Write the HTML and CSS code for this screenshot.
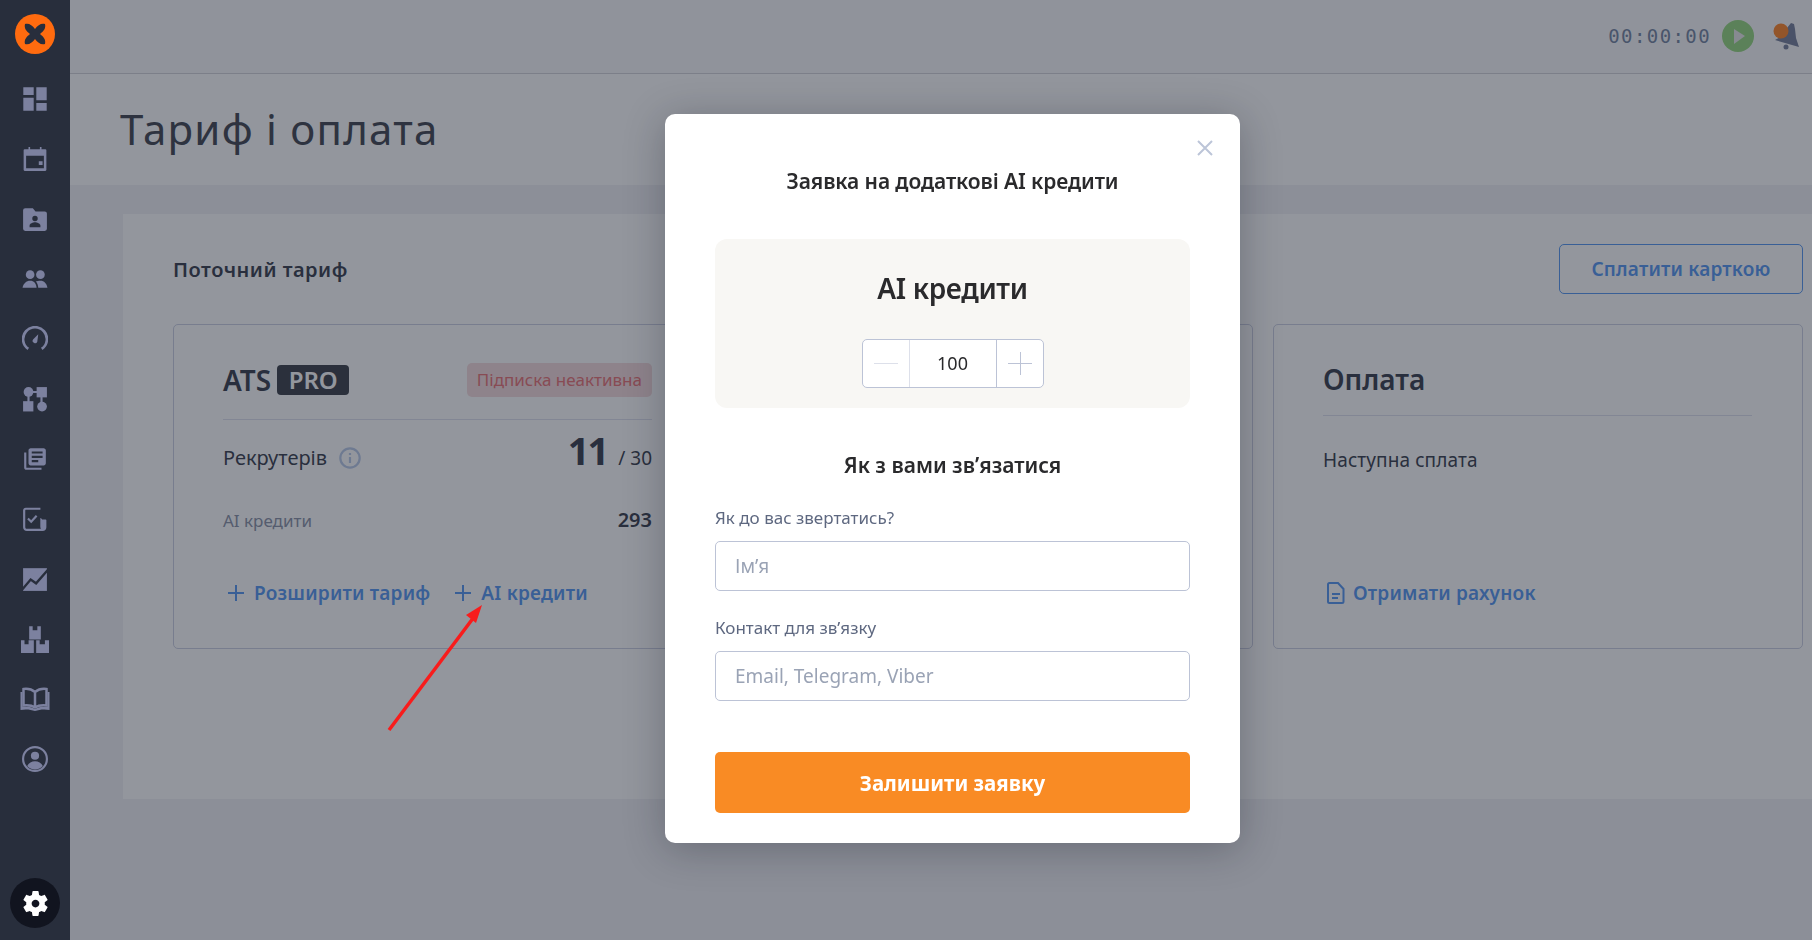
FILE: index.html
```html
<!DOCTYPE html>
<html lang="uk">
<head>
  <meta charset="UTF-8">
  <title>Тариф і оплата</title>
  <link rel="stylesheet" href="styles.css">
</head>
<body>

  <aside class="sidebar">
    <svg class="logo" viewBox="0 0 40 40">
      <circle cx="20" cy="20" r="20" fill="#ff6b0f"/>
      <path d="M10 10C14 9 17 11 20 15 23 11 26 9 30 10 31 14 29 17 25 20 29 23 31 26 30 30 26 31 23 29 20 25 17 29 14 31 10 30 9 26 11 23 15 20 11 17 9 14 10 10z" fill="#282e3c"/>
    </svg>
    <nav class="nav">
      <svg viewBox="2 2 20 20"><path d="M3 9h8V3H3zm0 12h8V11H3zm10 0h8v-6h-8zm0-8h8V3h-8z"/></svg>
      <svg viewBox="0 0 24 24"><path fill-rule="evenodd" d="M6 1h1.500v2h9V1H18v2h3.500a1 1 0 0 1 1 1v18a1 1 0 0 1-1 1h-19a1 1 0 0 1-1-1V4a1 1 0 0 1 1-1H6zM3.800 9v11.500h16.400V9zM15.500 14h3.500v3.500h-3.500z"/></svg>
      <svg viewBox="0 0 24 24"><path fill-rule="evenodd" d="M3 2h7l2.500 3H21a2 2 0 0 1 2 2v14a2 2 0 0 1-2 2H3a2 2 0 0 1-2-2V4a2 2 0 0 1 2-2zm9 7a2.500 2.500 0 1 0 0 5 2.500 2.500 0 0 0 0-5zm-5 10.500h10V18c0-1.800-3.300-3-5-3s-5 1.200-5 3z"/></svg>
      <svg viewBox="0 0 24 24"><circle cx="7.500" cy="8" r="4"/><circle cx="17" cy="8" r="4"/><path d="M.5 20c.8-4 3.500-6.500 7-6.500s5.500 2 6 6.500zM15 20c-.2-2.500-1-4.600-2.300-5.700 1-.5 2.800-.8 4.300-.8 3.500 0 5.800 2.500 6.500 6.500z"/></svg>
      <svg viewBox="0 0 24 24"><path class="line thick" d="M5.800 21.200A11 11 0 1 1 18.200 21.200"/><path d="M15 7.500l-.9 7a2.200 2.200 0 1 1-3.700-2.300z"/></svg>
      <svg viewBox="0 0 24 24"><circle cx="6" cy="5.500" r="4.500"/><rect x="13.500" y="1" width="9.500" height="9.500"/><rect x="1" y="14" width="9.500" height="9.500"/><circle cx="18.500" cy="19" r="4.500"/><path class="line" d="M6 8v7M9 5.500h6M18 9v7"/></svg>
      <svg viewBox="0 0 24 24"><path d="M4 6H2v14c0 1.100.9 2 2 2h14v-2H4V6zm16-4H8c-1.100 0-2 .9-2 2v12c0 1.100.9 2 2 2h12c1.100 0 2-.9 2-2V4c0-1.100-.9-2-2-2zm-1 9H9V9h10v2zm-4 4H9v-2h6v2zm4-8H9V5h10v2z"/></svg>
      <svg viewBox="0 0 24 24"><path d="M3.500 1.500h13.500v2H3.500a.8.800 0 0 0-.5.500v15.500c0 .8.700 1.500 1.500 1.500h13c-.4-.5-.6-1-.6-1.800V11.500c0-.5.4-.6.700-.3.300.3.600.8 1 1.300h3.300c.3 0 .6.300.6.700v6.300c0 1.800-1.400 3.500-3.400 3.500H4.500C2.500 23 1 21.500 1 19.500V4c0-1.400 1-2.500 2.500-2.500z"/><path class="line" d="M5.500 11.500l3 3 5-5.500"/></svg>
      <svg viewBox="0 0 24 24"><path d="M1 2h22v21H1z"/><path class="cut" d="M0 22l8-9.500 5 3.500L24 3.500"/></svg>
      <svg class="wide" viewBox="0 0 24 24"><path fill-rule="evenodd" d="M7 1h3v3.500h4V1h3v11.500H7zM0 13h3v3.500h3.500V13H11v11H0zM13 13h3v3.500h4.500V13H24v11H13z"/></svg>
      <svg class="book" viewBox="0 0 30 24"><path class="line thick" d="M15 5C12 2.500 7 1.500 3.500 2V18.500C8 18 12 18.500 15 20.500 18 18.500 22 18 26.500 18.500V2C23 1.500 18 2.500 15 5zM15 5V20.500"/><path d="M.5 5h2v15c4-.6 9-.3 12.500 2 3.500-2.300 8.500-2.600 12.500-2V5h2v18c-5-1-10-.6-14.500 1C10.500 22.400 5.500 22 .5 23z"/></svg>
      <svg viewBox="0 0 24 24"><circle class="line" cx="12" cy="12" r="11"/><circle cx="12" cy="9" r="3.800"/><path d="M4.800 18.500C6 15.500 9 14 12 14s6 1.500 7.200 4.500C17.500 20.500 15 21.800 12 21.800s-5.500-1.300-7.200-3.300z"/></svg>
    </nav>
    <div class="gear">
      <svg viewBox="0 0 24 24"><path d="M19.140 12.940c.04-.3.06-.61.06-.94 0-.32-.02-.64-.07-.94l2.030-1.580c.18-.14.23-.41.12-.61l-1.920-3.320c-.12-.22-.37-.29-.59-.22l-2.390.96c-.5-.38-1.030-.7-1.620-.94l-.36-2.540c-.04-.24-.24-.41-.48-.41h-3.840c-.24 0-.43.17-.47.41l-.36 2.540c-.59.24-1.130.57-1.620.94l-2.390-.96c-.22-.08-.47 0-.59.22L2.740 8.870c-.12.21-.08.47.12.61l2.030 1.580c-.05.3-.09.63-.09.94s.02.64.07.94l-2.030 1.580c-.18.14-.23.41-.12.61l1.920 3.320c.12.22.37.29.59.22l2.390-.96c.5.38 1.030.7 1.620.94l.36 2.540c.05.24.24.41.48.41h3.840c.24 0 .44-.17.47-.41l.36-2.540c.59-.24 1.130-.56 1.620-.94l2.390.96c.22.08.47 0 .59-.22l1.920-3.320c.12-.22.07-.47-.12-.61l-2.010-1.580zM12 15c-1.650 0-3-1.350-3-3s1.350-3 3-3 3 1.350 3 3-1.350 3-3 3z"/></svg>
    </div>
  </aside>

  <div class="main">
    <header class="topbar">
      <span class="timer">00:00:00</span>
      <svg class="play" viewBox="0 0 32 32"><circle cx="16" cy="16" r="16" fill="#8ed476"/><path d="M12 9l11 7-11 8z" fill="#e6e6e6"/></svg>
      <svg class="bell" viewBox="0 0 28 32">
        <path d="M19 3l3 1 1 5 1 9 3 9-24-7 7-4 5-8z" fill="#6c7694"/>
        <circle cx="14" cy="27" r="2.500" fill="#6c7694"/>
        <circle cx="9" cy="11" r="7.500" fill="#ff7c18"/>
      </svg>
    </header>

    <div class="page-title"><h1>Тариф і оплата</h1></div>

    <section class="panel">
      <div class="panel-head">
        <h2>Поточний тариф</h2>
        <button class="btn-outline">Сплатити карткою</button>
      </div>

      <div class="cards">
        <div class="card">
          <div class="card-head">
            <div class="plan"><span class="plan-name">ATS</span><span class="pro">PRO</span></div>
            <span class="tag">Підписка неактивна</span>
          </div>
          <div class="row row-big">
            <span class="row-label">Рекрутерів
              <svg class="info" viewBox="0 0 20 20"><circle cx="10" cy="10" r="8.800"/><path d="M10 9v5.500M10 5.500v1.800"/></svg>
            </span>
            <span class="count"><b>11</b> / 30</span>
          </div>
          <div class="row row-small">
            <span class="muted">AI кредити</span>
            <b class="credits">293</b>
          </div>
          <div class="actions">
            <a class="link"><span class="plus"></span>Розширити тариф</a>
            <a class="link"><span class="plus"></span>AI кредити</a>
          </div>
        </div>

        <div class="card"></div>

        <div class="card">
          <div class="card-head card-head-pay"><h3>Оплата</h3></div>
          <div class="next-pay">Наступна сплата</div>
          <div class="actions">
            <a class="link">
              <svg class="doc" viewBox="0 0 18 22"><path d="M2.500 1h8.500l5.500 6v12.500a1.500 1.500 0 0 1-1.500 1.500H2.500A1.500 1.500 0 0 1 1 19.500v-17A1.500 1.500 0 0 1 2.500 1zM5 12h8M5 16h6"/></svg>
              Отримати рахунок
            </a>
          </div>
        </div>
      </div>
    </section>
  </div>

  <div class="backdrop"></div>

  <div class="modal">
    <svg class="close" viewBox="0 0 16 16"><path d="M1 1l14 14M15 1L1 15"/></svg>
    <h4 class="modal-title">Заявка на додаткові AI кредити</h4>

    <div class="credit-box">
      <div class="credit-title">AI кредити</div>
      <div class="stepper">
        <span class="step step-minus"></span>
        <span class="step-value">100</span>
        <span class="step step-plus"></span>
      </div>
    </div>

    <h5 class="contact-title">Як з вами зв’язатися</h5>

    <label class="field">
      <span>Як до вас звертатись?</span>
      <input type="text" placeholder="Ім’я">
    </label>
    <label class="field">
      <span>Контакт для зв’язку</span>
      <input type="text" placeholder="Email, Telegram, Viber">
    </label>

    <button class="submit">Залишити заявку</button>
  </div>

  <svg class="arrow" viewBox="0 0 1812 940">
    <path d="M389 730L474 617" stroke="#f81c1c" stroke-width="3.500" fill="none"/>
    <path d="M482 605L466 615 476 623z" fill="#f81c1c"/>
  </svg>

</body>
</html>
```

FILE: styles.css
```css
* {
  box-sizing: border-box;
}

body {
  margin: 0;
  height: 940px;
  overflow: hidden;
  display: flex;
  font-family: 'Noto Sans', sans-serif;
  color: #2b3040;
  background: #f1f1f4;
}

h1, h2, h3, h4, h5 {
  margin: 0;
}

/* sidebar sits above the backdrop */
.sidebar {
  position: relative;
  z-index: 20;
  width: 70px;
  flex: none;
  display: flex;
  flex-direction: column;
  align-items: center;
  background: #282e3c;
  padding-top: 14px;
}

.logo {
  width: 40px;
  height: 40px;
}

.nav {
  display: flex;
  flex-direction: column;
  align-items: center;
  margin-top: 16px;
}

.nav svg {
  width: 26px;
  height: 26px;
  margin: 17px 0;
  fill: #7c819f;
}

.nav svg:first-child {
  margin-top: 16px;
}

.nav .wide {
  width: 28px;
  height: 28px;
  margin: 16px 0;
}

.nav .book {
  width: 30px;
  height: 24px;
  margin: 18px 0;
}

.nav .line {
  fill: none;
  stroke: #7c819f;
  stroke-width: 2;
}

.nav .thick {
  stroke-width: 2.500;
}

.nav .cut {
  fill: none;
  stroke: #282e3c;
  stroke-width: 2.200;
}

.gear {
  margin-top: auto;
  margin-bottom: 12px;
  width: 50px;
  height: 50px;
  border-radius: 50%;
  background: #11141f;
  display: flex;
  align-items: center;
  justify-content: center;
}

.gear svg {
  width: 31px;
  height: 31px;
  fill: #fff;
}

.main {
  flex: 1;
  min-width: 0;
}

.topbar {
  height: 74px;
  background: #f9f9fa;
  border-bottom: 1px solid #d0d0d6;
  display: flex;
  align-items: center;
  padding: 0 12px 2px 0;
  justify-content: flex-end;
}

.timer {
  font-family: 'DejaVu Sans Mono', monospace;
  font-size: 19px;
  letter-spacing: 1.400px;
  color: #6a7c9a;
  margin-right: 11px;
}

.play {
  width: 32px;
  height: 32px;
  margin-right: 18px;
}

.bell {
  width: 28px;
  height: 32px;
}

.page-title {
  height: 111px;
  background: #fff;
  padding: 26px 0 0 50px;
}

h1 {
  font-size: 42px;
  font-weight: 400;
  letter-spacing: 1.250px;
  color: #343845;
}

.panel {
  margin: 29px 0 0 53px;
  height: 585px;
  background: #fff;
  padding: 0 9px 0 50px;
}

.panel-head {
  height: 110px;
  display: flex;
  align-items: center;
  justify-content: space-between;
}

h2 {
  font-size: 20px;
  font-weight: 600;
  letter-spacing: .5px;
}

.btn-outline {
  width: 244px;
  height: 50px;
  border: 1px solid #4a90f0;
  border-radius: 5px;
  background: none;
  color: #4a90f0;
  font: 600 19px 'Noto Sans', sans-serif;
  letter-spacing: .2px;
}

.cards {
  display: flex;
  gap: 20px;
}

.card {
  width: 530px;
  height: 325px;
  border: 1px solid #c8cce0;
  border-radius: 5px;
  padding: 0 50px 0 49px;
  display: flex;
  flex-direction: column;
}

.card-head {
  height: 95px;
  padding: 38px 0 22px;
  border-bottom: 1px solid #dcdeec;
  display: flex;
  align-items: center;
  justify-content: space-between;
}

.card-head-pay {
  height: 91px;
  padding: 36px 0 19px;
}

h3 {
  font-size: 28px;
  font-weight: 600;
}

.plan {
  display: flex;
  align-items: center;
  gap: 6px;
}

.plan-name {
  font-size: 28px;
  font-weight: 600;
}

.pro {
  background: #2e323c;
  color: #fff;
  border-radius: 4px;
  font-size: 24px;
  font-weight: 600;
  line-height: 30px;
  width: 72px;
  text-align: center;
}

.tag {
  background: #f4d9da;
  color: #e8686c;
  border-radius: 5px;
  font-size: 17px;
  line-height: 34px;
  padding: 0 10px;
}

.row {
  display: flex;
  justify-content: space-between;
  align-items: baseline;
}

.row-big {
  height: 62px;
  padding-top: 4px;
  font-size: 20px;
}

.row-label {
  display: flex;
  align-items: center;
  gap: 12px;
}

.info {
  width: 22px;
  height: 22px;
  fill: none;
  stroke: #b4c6e6;
  stroke-width: 2;
}

.count {
  font-size: 19px;
}

.count b {
  font-size: 38px;
  margin-right: 6px;
  font-weight: 700;
  letter-spacing: -2px;
}

.row-small {
  height: 28px;
  margin-top: 24px;
}

.muted {
  font-size: 17px;
  color: #828aa0;
}

.credits {
  font-size: 20px;
  font-weight: 600;
}

.actions {
  margin-top: auto;
  margin-bottom: 41px;
  display: flex;
  gap: 20px;
  height: 28px;
  align-items: center;
}

.link {
  display: flex;
  align-items: center;
  color: #4a90f0;
  font-size: 19px;
  font-weight: 600;
  letter-spacing: .2px;
}

.plus {
  position: relative;
  width: 16px;
  height: 16px;
  margin: 0 10px 0 5px;
}

.plus::before, .plus::after {
  content: '';
  position: absolute;
  background: #4a90f0;
}

.plus::before {
  left: 0;
  right: 0;
  top: 7px;
  height: 2px;
}

.plus::after {
  top: 0;
  bottom: 0;
  left: 7px;
  width: 2px;
}

.doc {
  width: 18px;
  height: 22px;
  margin: 0 8px 0 4px;
  fill: none;
  stroke: #4a90f0;
  stroke-width: 2;
}

.next-pay {
  margin-top: 31px;
  font-size: 19px;
  letter-spacing: .1px;
}

.backdrop {
  position: fixed;
  inset: 0;
  z-index: 10;
  background: rgba(40, 46, 60, 0.5);
}

.modal {
  position: absolute;
  left: 665px;
  top: 114px;
  z-index: 30;
  width: 575px;
  height: 729px;
  background: #fff;
  border-radius: 10px;
  box-shadow: 0 6px 40px rgba(20, 24, 36, 0.3);
  padding: 52px 50px 0;
  color: #2a2a2c;
}

.close {
  position: absolute;
  top: 26px;
  right: 27px;
  width: 16px;
  height: 16px;
  fill: none;
  stroke: #bcc5d8;
  stroke-width: 2;
}

.modal-title {
  font-size: 21px;
  font-weight: 600;
  letter-spacing: -.1px;
  text-align: center;
  line-height: 30px;
}

.credit-box {
  margin-top: 43px;
  height: 169px;
  background: #f8f7f4;
  border-radius: 12px;
  display: flex;
  flex-direction: column;
  align-items: center;
  padding-top: 27px;
}

.credit-title {
  font-size: 28px;
  font-weight: 600;
  letter-spacing: -.35px;
  line-height: 44px;
}

.stepper {
  margin-top: 29px;
  width: 182px;
  height: 49px;
  background: #fff;
  border: 1px solid #bcc3d6;
  border-radius: 5px;
  display: flex;
}

.step {
  position: relative;
  width: 47px;
}

.step-minus {
  border-right: 1px solid #dde0ea;
}

.step-plus {
  border-left: 1px solid #bcc3d6;
}

.step::before, .step-plus::after {
  content: '';
  position: absolute;
  background: #bcc3d6;
}

.step::before {
  left: 11px;
  right: 11px;
  top: 23px;
  height: 1px;
}

.step-minus::before {
  background: #dde0ea;
}

.step-plus::after {
  left: 23px;
  top: 12px;
  bottom: 12px;
  width: 1px;
}

.step-value {
  flex: 1;
  text-align: center;
  font-size: 18px;
  line-height: 47px;
}

.contact-title {
  margin-top: 42px;
  text-align: center;
  font-size: 21px;
  font-weight: 600;
  line-height: 30px;
}

.field {
  display: block;
  margin-top: 25px;
  font-size: 17px;
  color: #5e6880;
}

.field + .field {
  margin-top: 25px;
}

.field span {
  display: block;
  line-height: 24px;
  margin-top: 26px;
}

.field + .field span {
  margin-top: 0;
}

.field input {
  display: block;
  width: 100%;
  height: 50px;
  margin-top: 11px;
  padding: 0 19px;
  border: 1px solid #bcc3d6;
  border-radius: 5px;
  font: 19px 'Noto Sans', sans-serif;
  outline: none;
}

.field input::placeholder {
  color: #9aa3b5;
}

.submit {
  display: block;
  width: 100%;
  height: 61px;
  margin-top: 51px;
  border: 0;
  border-radius: 5px;
  background: #f98b24;
  color: #fff;
  font: 700 20.500px 'Noto Sans', sans-serif;
}

/* red annotation drawn on the screenshot */
.arrow {
  position: fixed;
  left: 0;
  top: 0;
  width: 1812px;
  height: 940px;
  z-index: 40;
  pointer-events: none;
}
```
